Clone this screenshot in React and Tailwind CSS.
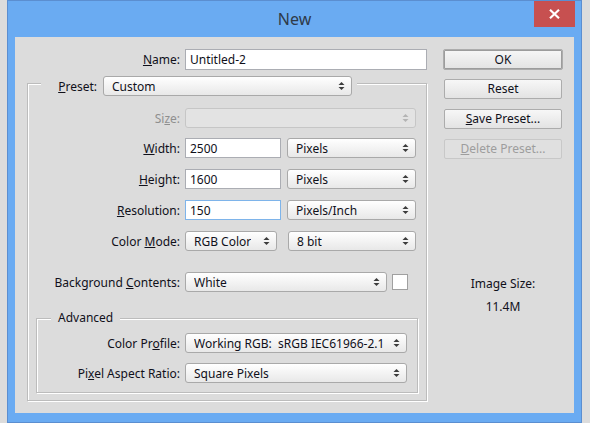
import React from "react";

function Arrows({ disabled }) {
  const c = disabled ? "#b4b4b4" : "#3c3c3c";
  return (
    <svg width="7" height="10" viewBox="0 0 7 10" className="shrink-0">
      <polygon points="0.5,4 3.5,1 6.5,4" fill={c} />
      <polygon points="0.5,6 3.5,9 6.5,6" fill={c} />
    </svg>
  );
}

function Select({ className = "", children, disabled }) {
  return (
    <div
      className={
        "flex h-[20px] shrink-0 items-center justify-between rounded-[3px] border pl-[8px] pr-[6px] " +
        (disabled
          ? "border-[#c6c6c6] bg-[#e3e3e3] "
          : "border-[#a9a9a9] bg-linear-to-b from-[#ffffff] to-[#e8e8e8] ") +
        className
      }
    >
      <span className="translate-y-[1px] truncate whitespace-pre">{children}</span>
      <Arrows disabled={disabled} />
    </div>
  );
}

function Input({ className = "", children, focused, noShift }) {
  return (
    <div
      className={
        "flex h-[20px] shrink-0 items-center border bg-white pl-[4px] " +
        (focused ? "border-[#7eb4ea] " : "border-[#abadb3] ") +
        className
      }
    >
      <span className={noShift ? "" : "translate-y-[1px]"}>{children}</span>
    </div>
  );
}

function Btn({ className = "", children, disabled }) {
  return (
    <div
      className={
        "flex items-center justify-center rounded-[2px] border " +
        (disabled
          ? "border-[#c8c8c8] bg-[#e0e0e0] text-[#9d9d9d] "
          : "border-[#acacac] bg-linear-to-b from-[#f7f7f7] to-[#e3e3e3] ") +
        className
      }
    >
      {children}
    </div>
  );
}

const groupBorder =
  "border border-[#bcbcbc] shadow-[inset_1px_1px_0_#ffffff,1px_1px_0_#ffffff]";

const lbl = "w-[152px] translate-y-[1px] text-right";
const lbl2 = "w-[143px] translate-y-[1px] text-right";

export default function App() {
  return (
    <div className="h-[423px] w-[590px] overflow-hidden bg-[#dcdcdc] font-['Noto_Sans',sans-serif] text-[12px] leading-[16px] text-[#10101a]">
      <div className="ml-[7px] flex h-[423px] w-[575px] flex-col border border-[#5b8ed0] bg-[#6aabf2] px-[7px]">
        {/* title bar */}
        <div className="-mx-[7px] flex h-[36px] shrink-0 items-start">
          <div className="ml-[6px] w-[41px]" />
          <div className="flex h-[36px] flex-1 items-center justify-center text-[16px] leading-none text-[#2f3a48]">
            New
          </div>
          <div className="mr-[6px] flex h-[26px] w-[41px] items-center justify-center bg-[#c75050]">
            <svg width="11" height="10" viewBox="0 0 11 10">
              <path d="M1 0.8 L10 9.2 M10 0.8 L1 9.2" stroke="#ffffff" strokeWidth="2.2" />
            </svg>
          </div>
        </div>

        {/* content */}
        <div className="flex h-[376px] shrink-0 bg-[#dcdcdc]">
          {/* left column */}
          <div className="flex w-[412px] flex-col">
            <div className="mt-[12px] flex h-[21px] items-center">
              <div className="w-[165px] text-right">
                <u>N</u>ame:
              </div>
              <Input noShift className="ml-[5px] h-[21px] w-[242px]">
                Untitled-2
              </Input>
            </div>

            {/* outer group */}
            <div className={"ml-[12px] mt-[13px] flex w-[400px] flex-col pb-[7px] " + groupBorder}>
              <div className="-mt-[8px] flex h-[20px]">
                <div className="ml-[13px] flex items-center bg-[#dcdcdc] pl-[11px] pr-[5px]">
                  <div className="w-[45px] translate-y-[1px] text-right">
                    <u>P</u>reset:
                  </div>
                  <Select className="ml-[6px] w-[249px]">Custom</Select>
                </div>
              </div>

              <div className="mt-[12px] flex h-[20px] items-center">
                <div className={lbl + " text-[#8f8f8f]"}>
                  Si<u>z</u>e:
                </div>
                <Select disabled className="ml-[5px] w-[231px]">
                  {""}
                </Select>
              </div>

              <div className="mt-[10px] flex h-[20px] items-center">
                <div className={lbl}>
                  <u>W</u>idth:
                </div>
                <Input className="ml-[5px] w-[96px]">2500</Input>
                <Select className="ml-[6px] w-[129px]">Pixels</Select>
              </div>

              <div className="mt-[11px] flex h-[20px] items-center">
                <div className={lbl}>
                  <u>H</u>eight:
                </div>
                <Input className="ml-[5px] w-[96px]">1600</Input>
                <Select className="ml-[6px] w-[129px]">Pixels</Select>
              </div>

              <div className="mt-[11px] flex h-[20px] items-center">
                <div className={lbl}>
                  <u>R</u>esolution:
                </div>
                <Input focused className="ml-[5px] w-[96px]">
                  150
                </Input>
                <Select className="ml-[6px] w-[129px]">Pixels/Inch</Select>
              </div>

              <div className="mt-[11px] flex h-[20px] items-center">
                <div className={lbl}>
                  Color <u>M</u>ode:
                </div>
                <Select className="ml-[5px] w-[92px]">RGB Color</Select>
                <Select className="ml-[11px] w-[128px]">8 bit</Select>
              </div>

              <div className="mt-[21px] flex h-[20px] items-center">
                <div className={lbl}>
                  Background <u>C</u>ontents:
                </div>
                <Select className="ml-[5px] w-[202px]">White</Select>
                <div className="ml-[5px] h-[16px] w-[16px] border border-[#a0a0a0] bg-white" />
              </div>

              {/* advanced group */}
              <div className={"ml-[8px] mt-[26px] flex w-[382px] flex-col pb-[9px] " + groupBorder}>
                <div className="-mt-[9px] flex h-[16px]">
                  <div className="ml-[14px] flex items-center bg-[#dcdcdc] px-[7px]">Advanced</div>
                </div>
                <div className="mt-[7px] flex h-[20px] items-center">
                  <div className={lbl2}>
                    Color Pr<u>o</u>file:
                  </div>
                  <Select className="ml-[5px] w-[222px]">{"Working RGB:  sRGB IEC61966-2.1"}</Select>
                </div>
                <div className="mt-[10px] flex h-[20px] items-center">
                  <div className={lbl2}>
                    Pi<u>x</u>el Aspect Ratio:
                  </div>
                  <Select className="ml-[5px] w-[222px]">Square Pixels</Select>
                </div>
              </div>
            </div>
          </div>

          {/* right column */}
          <div className="ml-[16px] mt-[12px] flex w-[120px] flex-col">
            <Btn className="h-[21px] w-[120px] border-[#6e6e6e] shadow-[inset_0_0_0_1px_#9c9c9c]">OK</Btn>
            <Btn className="mx-[1px] mt-[9px] h-[20px] w-[118px]">Reset</Btn>
            <Btn className="mx-[1px] mt-[10px] h-[20px] w-[118px]">
              <span>
                <u>S</u>ave Preset...
              </span>
            </Btn>
            <Btn disabled className="mx-[1px] mt-[10px] h-[20px] w-[118px]">
              <span>
                <u>D</u>elete Preset...
              </span>
            </Btn>
            <div className="mt-[117px] text-center leading-[15px]">Image Size:</div>
            <div className="mt-[8px] text-center leading-[15px]">11.4M</div>
          </div>
        </div>
      </div>
    </div>
  );
}
